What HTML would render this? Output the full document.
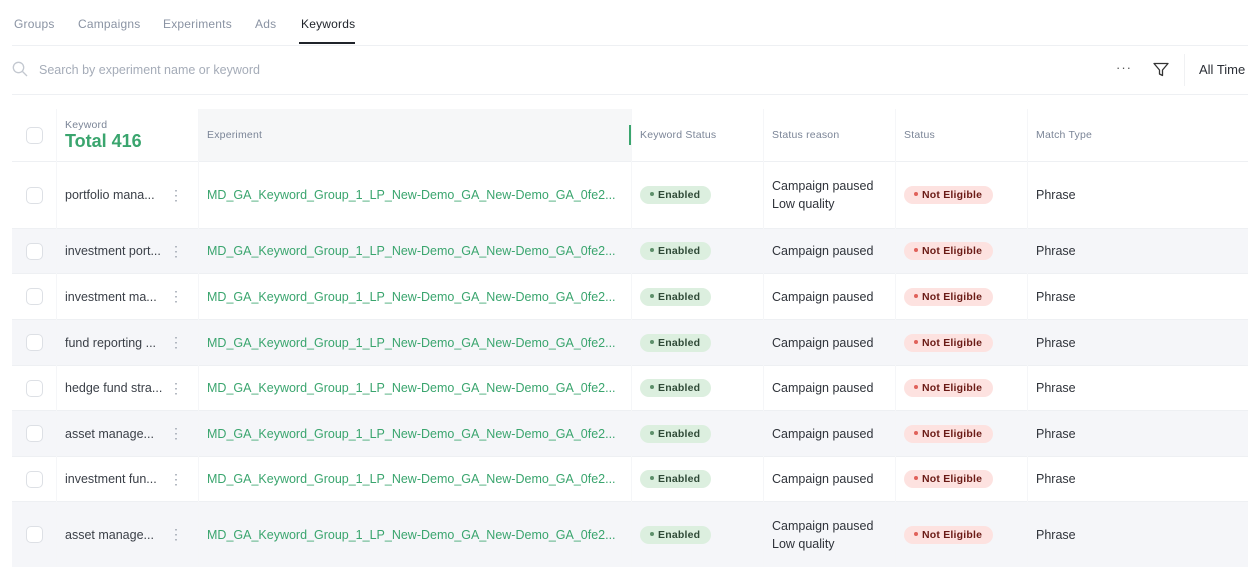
<!DOCTYPE html>
<html><head><meta charset="utf-8"><style>
*{box-sizing:border-box;margin:0;padding:0}
body{width:1248px;height:572px;overflow:hidden;background:#fff;font-family:"Liberation Sans",Arial,sans-serif;position:relative;color:#2b2f36}
.a{position:absolute}
.tab{position:absolute;top:17px;font-size:12px;color:#8a93a3;letter-spacing:.2px}
.row{position:absolute;left:12px;width:1236px;border-bottom:1px solid #eef0f3}
.row.g{background:#f5f6f9}
.c{position:absolute;top:0;bottom:0;display:flex;align-items:center}
.cb{left:14px;width:17px;height:17px;border:1.5px solid #dde0e5;border-radius:5px;background:#fff;position:absolute;top:50%;margin-top:-8.5px}
.kw{left:53px;font-size:12.5px;color:#3a3f47}
.dots{left:157px;font-size:14px;color:#9aa1ad;width:8px}
.ex{left:195px;font-size:12.5px;color:#3aa56e;letter-spacing:0}
.pill{font-size:10.5px;font-weight:bold;padding:0 11px 0 10px;height:18px;line-height:18px;border-radius:9px;display:inline-block;letter-spacing:.2px}
.en{background:#dcefdf;color:#2f4a37}
.ne{background:#fde2e0;color:#6a1a15}
.dot{display:inline-block;width:4px;height:4px;border-radius:2px;margin-right:4px;vertical-align:middle;position:relative;top:-1px}
.ks{left:628px}.sr{left:760px;font-size:12.5px;line-height:18px;color:#2f333a}.st{left:892px}.mt{left:1024px;font-size:12.5px;color:#2f333a}
.vl{position:absolute;top:109px;height:458px;width:1px;background:#f5f6f8}
.h{position:absolute;font-size:10.5px;color:#7b8597;letter-spacing:.2px}
</style></head><body>
<div class="tab" style="left:14px">Groups</div>
<div class="tab" style="left:78px">Campaigns</div>
<div class="tab" style="left:163px">Experiments</div>
<div class="tab" style="left:255px">Ads</div>
<div class="tab" style="left:301px;color:#1f232a">Keywords</div>
<div class="a" style="left:299px;top:42px;width:56px;height:2px;background:#1f232a"></div>
<div class="a" style="left:12px;top:45px;width:1236px;height:1px;background:#eef0f3"></div>
<svg class="a" style="left:12px;top:61px" width="16" height="16" viewBox="0 0 16 16"><circle cx="6.5" cy="6.5" r="5.2" fill="none" stroke="#c3c8d0" stroke-width="1.3"/><path d="M10.5 10.5L15 15" stroke="#c3c8d0" stroke-width="1.3"/></svg>
<div class="a" style="left:39px;top:63px;font-size:12.5px;color:#a5acb8">Search by experiment name or keyword</div>
<div class="a" style="left:1116px;top:60px;font-size:13px;color:#555;letter-spacing:1px">···</div>
<svg class="a" style="left:1153px;top:62px" width="16" height="15" viewBox="0 0 16 15"><path d="M1 1.5H15L9.5 8V13.5L6.5 12V8Z" fill="none" stroke="#333" stroke-width="1.3" stroke-linejoin="round"/></svg>
<div class="a" style="left:1184px;top:54px;width:1px;height:32px;background:#f0f1f3"></div>
<div class="a" style="left:1199px;top:62px;font-size:13px;color:#2b2f36">All Time</div>
<div class="a" style="left:12px;top:94px;width:1236px;height:1px;background:#eef0f3"></div>

<div class="row" style="top:109px;height:53px;background:#fff">
<div class="a" style="left:186px;top:0;width:433px;height:52px;background:#f6f7f8"></div>
<div class="cb"></div>
<div class="h" style="left:53px;top:10px">Keyword</div>
<div class="a" style="left:53px;top:22px;font-size:18px;font-weight:bold;color:#3aa56e">Total 416</div>
<div class="h" style="left:195px;top:20px">Experiment</div>
<div class="a" style="left:617px;top:16px;width:3px;height:20px;background:#3aa56e"></div>
<div class="h" style="left:628px;top:20px">Keyword Status</div>
<div class="h" style="left:760px;top:20px">Status reason</div>
<div class="h" style="left:892px;top:20px">Status</div>
<div class="h" style="left:1024px;top:20px">Match Type</div>
</div>

<div class="row" style="top:162px;height:67px"><div class="cb"></div><div class="c kw">portfolio mana...</div><div class="c dots">⋮</div><div class="c ex">MD_GA_Keyword_Group_1_LP_New-Demo_GA_New-Demo_GA_0fe2...</div><div class="c ks"><span class="pill en"><span class="dot" style="background:#5d8f6a"></span>Enabled</span></div><div class="c sr">Campaign paused<br>Low quality</div><div class="c st"><span class="pill ne"><span class="dot" style="background:#e0615a"></span>Not Eligible</span></div><div class="c mt">Phrase</div></div>
<div class="row g" style="top:229px;height:45px"><div class="cb"></div><div class="c kw">investment port...</div><div class="c dots">⋮</div><div class="c ex">MD_GA_Keyword_Group_1_LP_New-Demo_GA_New-Demo_GA_0fe2...</div><div class="c ks"><span class="pill en"><span class="dot" style="background:#5d8f6a"></span>Enabled</span></div><div class="c sr">Campaign paused</div><div class="c st"><span class="pill ne"><span class="dot" style="background:#e0615a"></span>Not Eligible</span></div><div class="c mt">Phrase</div></div>
<div class="row" style="top:274px;height:46px"><div class="cb"></div><div class="c kw">investment ma...</div><div class="c dots">⋮</div><div class="c ex">MD_GA_Keyword_Group_1_LP_New-Demo_GA_New-Demo_GA_0fe2...</div><div class="c ks"><span class="pill en"><span class="dot" style="background:#5d8f6a"></span>Enabled</span></div><div class="c sr">Campaign paused</div><div class="c st"><span class="pill ne"><span class="dot" style="background:#e0615a"></span>Not Eligible</span></div><div class="c mt">Phrase</div></div>
<div class="row g" style="top:320px;height:46px"><div class="cb"></div><div class="c kw">fund reporting ...</div><div class="c dots">⋮</div><div class="c ex">MD_GA_Keyword_Group_1_LP_New-Demo_GA_New-Demo_GA_0fe2...</div><div class="c ks"><span class="pill en"><span class="dot" style="background:#5d8f6a"></span>Enabled</span></div><div class="c sr">Campaign paused</div><div class="c st"><span class="pill ne"><span class="dot" style="background:#e0615a"></span>Not Eligible</span></div><div class="c mt">Phrase</div></div>
<div class="row" style="top:366px;height:45px"><div class="cb"></div><div class="c kw">hedge fund stra...</div><div class="c dots">⋮</div><div class="c ex">MD_GA_Keyword_Group_1_LP_New-Demo_GA_New-Demo_GA_0fe2...</div><div class="c ks"><span class="pill en"><span class="dot" style="background:#5d8f6a"></span>Enabled</span></div><div class="c sr">Campaign paused</div><div class="c st"><span class="pill ne"><span class="dot" style="background:#e0615a"></span>Not Eligible</span></div><div class="c mt">Phrase</div></div>
<div class="row g" style="top:411px;height:46px"><div class="cb"></div><div class="c kw">asset manage...</div><div class="c dots">⋮</div><div class="c ex">MD_GA_Keyword_Group_1_LP_New-Demo_GA_New-Demo_GA_0fe2...</div><div class="c ks"><span class="pill en"><span class="dot" style="background:#5d8f6a"></span>Enabled</span></div><div class="c sr">Campaign paused</div><div class="c st"><span class="pill ne"><span class="dot" style="background:#e0615a"></span>Not Eligible</span></div><div class="c mt">Phrase</div></div>
<div class="row" style="top:457px;height:45px"><div class="cb"></div><div class="c kw">investment fun...</div><div class="c dots">⋮</div><div class="c ex">MD_GA_Keyword_Group_1_LP_New-Demo_GA_New-Demo_GA_0fe2...</div><div class="c ks"><span class="pill en"><span class="dot" style="background:#5d8f6a"></span>Enabled</span></div><div class="c sr">Campaign paused</div><div class="c st"><span class="pill ne"><span class="dot" style="background:#e0615a"></span>Not Eligible</span></div><div class="c mt">Phrase</div></div>
<div class="row g" style="top:502px;height:65px;border-bottom:none"><div class="cb"></div><div class="c kw">asset manage...</div><div class="c dots">⋮</div><div class="c ex">MD_GA_Keyword_Group_1_LP_New-Demo_GA_New-Demo_GA_0fe2...</div><div class="c ks"><span class="pill en"><span class="dot" style="background:#5d8f6a"></span>Enabled</span></div><div class="c sr">Campaign paused<br>Low quality</div><div class="c st"><span class="pill ne"><span class="dot" style="background:#e0615a"></span>Not Eligible</span></div><div class="c mt">Phrase</div></div>

<div class="vl" style="left:56px"></div><div class="vl" style="left:198px"></div><div class="vl" style="left:631px"></div><div class="vl" style="left:763px"></div><div class="vl" style="left:895px"></div><div class="vl" style="left:1027px"></div>
</body></html>
